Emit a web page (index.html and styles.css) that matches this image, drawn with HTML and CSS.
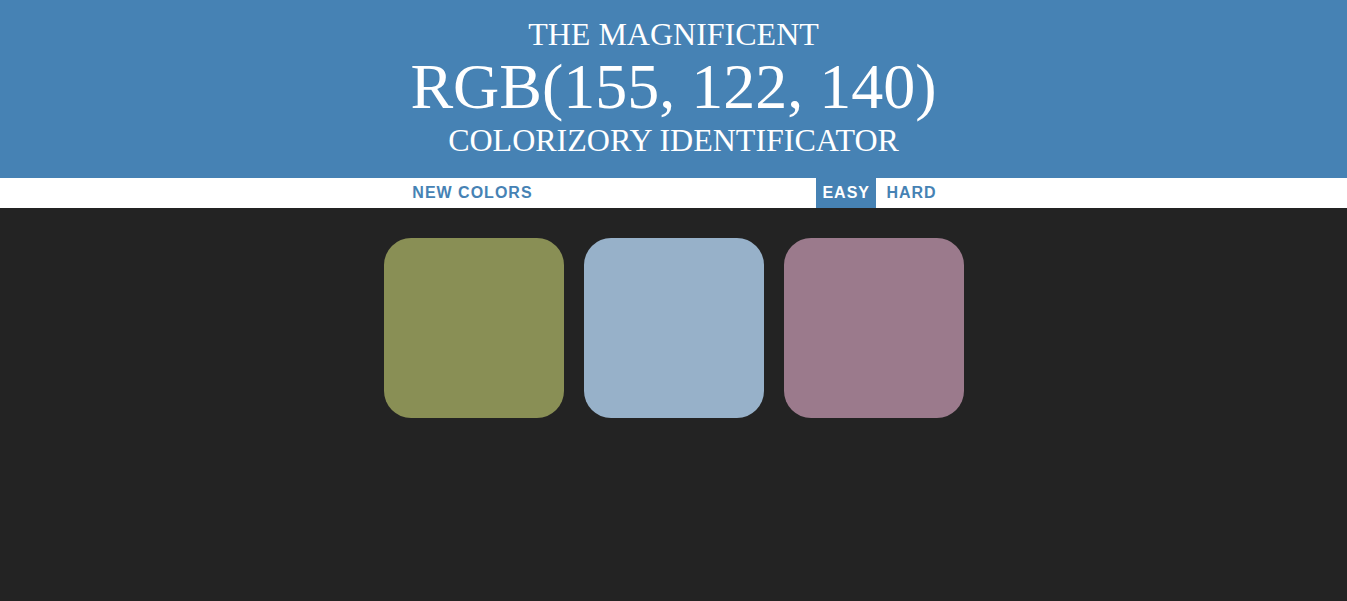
FILE: index.html
```html
<!DOCTYPE html>
<html>
<head>
<meta charset="utf-8">
<title>Color Game</title>
<link rel="stylesheet" href="styles.css">
</head>
<body>
<h1 class="title">
  <span class="title-line">The Magnificent</span>
  <span class="color-display">RGB(155, 122, 140)</span>
  <span class="title-line">Colorizory Identificator</span>
</h1>
<div class="stripe">
  <button class="btn">New Colors</button>
  <span class="message"></span>
  <button class="btn selected">Easy</button>
  <button class="btn">Hard</button>
</div>
<div class="board">
  <div class="square sq-olive"></div>
  <div class="square sq-blue"></div>
  <div class="square sq-mauve"></div>
</div>
</body>
</html>
```
FILE: styles.css
```css
html, body {
  margin: 0;
  padding: 0;
}
body {
  background: #232323;
  font-family: "Liberation Sans", Arial, sans-serif;
}
.title {
  margin: 0;
  padding: 17px 0 21px;
  background: #4682b4;
  color: #fff;
  font-family: "Liberation Serif", "Times New Roman", serif;
  font-weight: normal;
  text-transform: uppercase;
  text-align: center;
  display: flex;
  flex-direction: column;
  align-items: center;
}
.title-line {
  font-size: 32px;
  line-height: 34px;
}
.color-display {
  font-size: 64px;
  line-height: 72px;
}
.stripe {
  background: #fff;
  height: 30px;
  padding-left: 2px;
  display: flex;
  justify-content: center;
  align-items: stretch;
  gap: 4.45px;
}
.btn {
  border: none;
  background: none;
  margin: 0;
  padding: 0 6px;
  height: 30px;
  font-family: "Liberation Sans", Arial, sans-serif;
  font-size: 16px;
  font-weight: 700;
  letter-spacing: 1px;
  text-transform: uppercase;
  color: #4682b4;
}
.btn.selected {
  background: #4682b4;
  color: #fff;
}
.message {
  width: 20%;
}
.board {
  max-width: 600px;
  margin: 20px auto 0;
  display: flex;
  flex-wrap: wrap;
}
.square {
  width: 180px;
  height: 180px;
  margin: 10px;
  border-radius: 27px;
}
.sq-olive { background: #898f55; }
.sq-blue { background: #97b1c9; }
.sq-mauve { background: #9b7a8c; }
```
